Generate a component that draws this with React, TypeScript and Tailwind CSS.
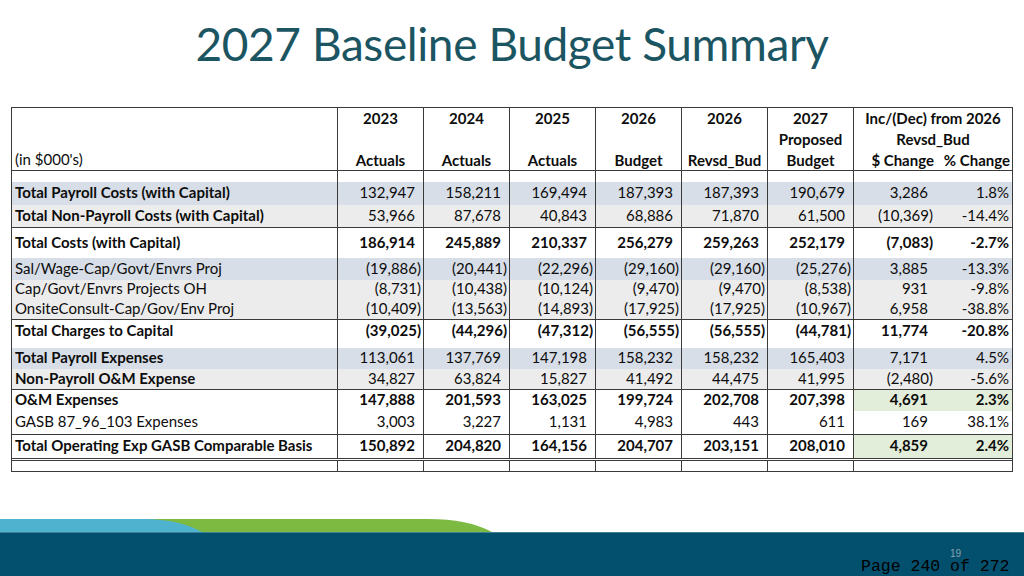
import React from "react";

type Row = {
  label: string;
  vals: string[];
  bold?: boolean;
  boldNums?: boolean;
  bg?: "blue" | "gray";
  green?: boolean;
  h: string;
  border?: "single" | "double";
};

const rows: (Row | { spacer: string })[] = [
  { spacer: "h-[11px]" },
  { label: "Total Payroll Costs (with Capital)", bold: true, bg: "blue", h: "h-[23px]", vals: ["132,947", "158,211", "169,494", "187,393", "187,393", "190,679", "3,286", "1.8%"] },
  { label: "Total Non-Payroll Costs (with Capital)", bold: true, bg: "gray", h: "h-[23px]", border: "single", vals: ["53,966", "87,678", "40,843", "68,886", "71,870", "61,500", "(10,369)", "-14.4%"] },
  { label: "Total Costs (with Capital)", bold: true, boldNums: true, h: "h-[30px]", vals: ["186,914", "245,889", "210,337", "256,279", "259,263", "252,179", "(7,083)", "-2.7%"] },
  { label: "Sal/Wage-Cap/Govt/Envrs Proj", bg: "blue", h: "h-[22px]", vals: ["(19,886)", "(20,441)", "(22,296)", "(29,160)", "(29,160)", "(25,276)", "3,885", "-13.3%"] },
  { label: "Cap/Govt/Envrs Projects OH", bg: "gray", h: "h-[19px]", vals: ["(8,731)", "(10,438)", "(10,124)", "(9,470)", "(9,470)", "(8,538)", "931", "-9.8%"] },
  { label: "OnsiteConsult-Cap/Gov/Env Proj", bg: "gray", h: "h-[21px]", border: "single", vals: ["(10,409)", "(13,563)", "(14,893)", "(17,925)", "(17,925)", "(10,967)", "6,958", "-38.8%"] },
  { label: "Total Charges to Capital", bold: true, boldNums: true, h: "h-[22px]", vals: ["(39,025)", "(44,296)", "(47,312)", "(56,555)", "(56,555)", "(44,781)", "11,774", "-20.8%"] },
  { spacer: "h-[6px]" },
  { label: "Total Payroll Expenses", bold: true, bg: "blue", h: "h-[21px]", vals: ["113,061", "137,769", "147,198", "158,232", "158,232", "165,403", "7,171", "4.5%"] },
  { label: "Non-Payroll O&M Expense", bold: true, bg: "gray", h: "h-[21px]", border: "single", vals: ["34,827", "63,824", "15,827", "41,492", "44,475", "41,995", "(2,480)", "-5.6%"] },
  { label: "O&M Expenses", bold: true, boldNums: true, green: true, h: "h-[21px]", vals: ["147,888", "201,593", "163,025", "199,724", "202,708", "207,398", "4,691", "2.3%"] },
  { label: "GASB 87_96_103 Expenses", h: "h-[24px]", border: "single", vals: ["3,003", "3,227", "1,131", "4,983", "443", "611", "169", "38.1%"] },
  { label: "Total Operating Exp GASB Comparable Basis", bold: true, boldNums: true, green: true, h: "h-[26px]", border: "double", vals: ["150,892", "204,820", "164,156", "204,707", "203,151", "208,010", "4,859", "2.4%"] },
  { spacer: "h-[10px]" },
];

const grid = "grid grid-cols-[326px_86px_86px_86px_86px_86px_86px_82px_76px]";
const vline = "border-r border-[#3a3a3a]";

function DataRow({ r }: { r: Row }) {
  const bg = r.bg === "blue" ? "bg-[#d7dee7]" : r.bg === "gray" ? "bg-[#ececec]" : "bg-white";
  const bottom =
    r.border === "single"
      ? "border-b border-[#3a3a3a]"
      : r.border === "double"
      ? "border-b-[3px] border-double border-[#3a3a3a]"
      : "";
  const lw = r.bold ? "font-bold" : "font-normal";
  const nw = r.boldNums ? "font-bold" : "font-normal";
  return (
    <div className={`${grid} ${r.h} ${bottom}`}>
      <div className={`${bg} ${vline} ${lw} flex items-center pb-[2px] pl-[3px] whitespace-nowrap`}>{r.label}</div>
      {r.vals.slice(0, 6).map((v, i) => (
        <div
          key={i}
          className={`${bg} ${vline} ${nw} flex items-center pb-[2px] justify-end ${v.startsWith("(") ? "pr-[2px]" : "pr-[8px]"}`}
        >
          {v}
        </div>
      ))}
      <div
        className={`${r.green ? "bg-[#e2eed9]" : bg} ${nw} flex items-center pb-[2px] justify-end ${r.vals[6].startsWith("(") ? "pr-[3px]" : "pr-[8px]"}`}
      >
        {r.vals[6]}
      </div>
      <div className={`${r.green ? "bg-[#e2eed9]" : bg} ${nw} flex items-center pb-[2px] justify-end pr-[3px]`}>{r.vals[7]}</div>
    </div>
  );
}

function SpacerRow({ h }: { h: string }) {
  return (
    <div className={`${grid} ${h}`}>
      {Array.from({ length: 7 }).map((_, i) => (
        <div key={i} className={vline} />
      ))}
      <div />
      <div />
    </div>
  );
}

function HeaderCol({ lines }: { lines: string[] }) {
  return (
    <div className={`${vline} flex flex-col font-bold`}>
      {lines.map((l, i) => (
        <div key={i} className="h-[21px] flex items-center justify-center">
          {l}
        </div>
      ))}
    </div>
  );
}

export default function App() {
  return (
    <div className="w-[1024px] h-[576px] bg-white flex flex-col relative overflow-hidden font-['Lato',sans-serif] text-[#0d0d0d]">
      <div className="h-[107px] flex justify-center pt-[18px]">
        <h1 className="text-[46px] leading-[52px] text-[#1c5562] tracking-[-0.4px] font-normal">
          2027 Baseline Budget Summary
        </h1>
      </div>
      <div className="ml-[11px] w-[1002px] border border-[#3a3a3a] text-[15px] leading-none">
        <div className={`${grid} h-[63px] border-b border-[#3a3a3a]`}>
          <div className={`${vline} flex items-end pl-[3px] pb-[4px]`}>(in $000's)</div>
          <HeaderCol lines={["2023", "", "Actuals"]} />
          <HeaderCol lines={["2024", "", "Actuals"]} />
          <HeaderCol lines={["2025", "", "Actuals"]} />
          <HeaderCol lines={["2026", "", "Budget"]} />
          <HeaderCol lines={["2026", "", "Revsd_Bud"]} />
          <HeaderCol lines={["2027", "Proposed", "Budget"]} />
          <div className="col-span-2 flex flex-col font-bold">
            <div className="h-[21px] flex items-center justify-center whitespace-nowrap">Inc/(Dec) from 2026</div>
            <div className="h-[21px] flex items-center justify-center">Revsd_Bud</div>
            <div className="h-[21px] grid grid-cols-[82px_76px]">
              <div className="flex items-center justify-end pr-[2px] whitespace-nowrap">$ Change</div>
              <div className="flex items-center justify-end pr-[2px] whitespace-nowrap">% Change</div>
            </div>
          </div>
        </div>
        {rows.map((r, i) =>
          "spacer" in r ? <SpacerRow key={i} h={r.spacer} /> : <DataRow key={i} r={r} />
        )}
      </div>
      <div className="flex-1" />
      <svg width="1024" height="13" viewBox="0 0 1024 13" className="block">
        <path d="M0 0 H428 Q468 0 492 13 H0 Z" fill="#7dba42" />
        <path d="M0 0 H148 Q180 1 202 13 H0 Z" fill="#4fb2cf" />
      </svg>
      <div className="h-[44px] bg-[#03506e] border-t border-[#3f7f97]" />
      <div className="absolute left-[950px] top-[546px] text-[10px] text-[#8aa0ab] font-['Liberation_Sans',sans-serif]">
        19
      </div>
      <div className="absolute left-[861px] top-[558px] text-[16.5px] leading-[18px] text-black font-['Liberation_Mono',monospace]">
        Page 240 of 272
      </div>
    </div>
  );
}
